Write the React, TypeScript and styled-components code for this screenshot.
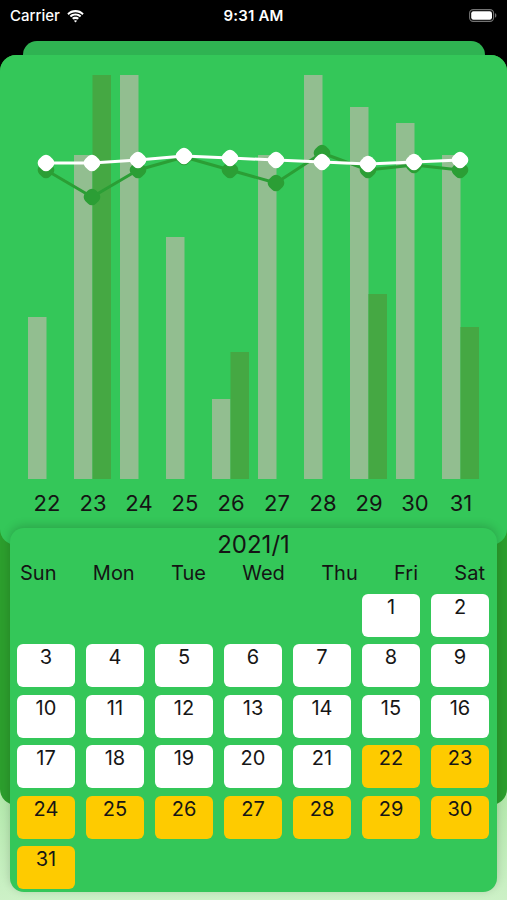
import React from "react";
import styled, { createGlobalStyle } from "styled-components";

const GlobalStyle = createGlobalStyle`
  html, body {
    margin: 0;
    padding: 0;
    background: #000;
  }
  * {
    box-sizing: border-box;
  }
`;

const Page = styled.div`
  width: 507px;
  height: 900px;
  overflow: hidden;
  display: flex;
  flex-direction: column;
  font-family: Inter, "Liberation Sans", sans-serif;
  background: linear-gradient(
    180deg,
    #000 0,
    #000 450px,
    #a9e5a2 450px,
    #b4e9ad 800px,
    #cdf1c7 900px
  );
`;

const StatusBar = styled.div`
  height: 41px;
  flex-shrink: 0;
  display: flex;
  align-items: center;
  justify-content: space-between;
  padding: 0 10px 10px 10px;
  color: #fff;
`;

const Carrier = styled.div`
  display: flex;
  align-items: center;
  gap: 6px;
  font-size: 15px;
  font-weight: 500;
  width: 100px;
`;

const Clock = styled.div`
  font-size: 15px;
  font-weight: 600;
  letter-spacing: 0.2px;
`;

const BatteryWrap = styled.div`
  width: 100px;
  display: flex;
  justify-content: flex-end;
`;

const BackTab = styled.div`
  margin: 0 22px 0 23px;
  height: 14px;
  flex-shrink: 0;
  background: #2fb352;
  border-radius: 14px 14px 0 0;
`;

const Deck = styled.div`
  display: flex;
  flex-direction: column;
  background: #2c9e2d;
  border-radius: 16px;
`;

const ChartCard = styled.div`
  height: 490px;
  background: #34c759;
  border-radius: 16px;
  display: flex;
  flex-direction: column;
`;

const LabelRow = styled.div`
  display: flex;
  padding-left: 24px;
  margin-top: 1px;
`;

const DayLabel = styled.div`
  width: 46px;
  text-align: center;
  font-size: 22px;
  line-height: 34px;
  color: #141414;
`;

const Calendar = styled.div`
  margin: -17px 10px -87px 10px;
  height: 364px;
  background: #34c759;
  border-radius: 14px;
  padding: 3px 7px 3px 7px;
  box-shadow: 0 -2px 10px rgba(0, 0, 0, 0.18);
  display: flex;
  flex-direction: column;
  position: relative;
`;

const Title = styled.div`
  text-align: center;
  font-size: 24px;
  line-height: 28px;
  color: #141414;
`;

const WeekRow = styled.div`
  display: flex;
  justify-content: space-between;
  padding: 0 5px 0 3px;
  margin-top: 2px;
  font-size: 20px;
  line-height: 24px;
  color: #141414;
`;

const Grid = styled.div`
  margin-top: 9px;
  display: grid;
  grid-template-columns: repeat(7, 58px);
  grid-auto-rows: 43px;
  column-gap: 11px;
  row-gap: 7.4px;
`;

const Cell = styled.div<{ $mark?: boolean; $col?: number }>`
  background: ${(p) => (p.$mark ? "#fecb00" : "#fff")};
  border-radius: 6px;
  text-align: center;
  font-size: 20px;
  line-height: 24px;
  padding-top: 1px;
  color: #161616;
  ${(p) => (p.$col ? `grid-column-start: ${p.$col};` : "")}
`;

const labels = [22, 23, 24, 25, 26, 27, 28, 29, 30, 31];

// bar tops (svg coords), bottom is 424
const lightTops = [262, 100, 20, 182, 344, 100, 20, 52, 68, 100];
const darkTops: (number | null)[] = [null, 20, null, null, 297, null, null, 239, null, 272];

const whiteYs = [108, 108, 105, 101, 103, 105, 107, 109, 107, 105];
const darkYs = [115, 142, 115, 102, 115, 128, 98, 115, 110, 115];

const Dot = ({ x, y, fill }: { x: number; y: number; fill: string }) => (
  <rect
    x={x - 7.5}
    y={y - 7.5}
    width={15}
    height={15}
    rx={5.5}
    fill={fill}
    transform={`rotate(45 ${x} ${y})`}
  />
);

const Chart = () => {
  const px = (i: number) => 46 + i * 46;
  const whitePts = whiteYs.map((y, i) => `${px(i)},${y}`).join(" ");
  const darkPts = darkYs.map((y, i) => `${px(i)},${y}`).join(" ");
  return (
    <svg width="507" height="430" style={{ display: "block" }}>
      {lightTops.map((t, i) => (
        <rect key={"l" + i} x={28 + i * 46} y={t} width={18.5} height={424 - t} fill="#92be90" />
      ))}
      {darkTops.map((t, i) =>
        t === null ? null : (
          <rect key={"d" + i} x={46.5 + i * 46} y={t} width={18.5} height={424 - t} fill="#45a843" />
        )
      )}
      <polyline points={darkPts} fill="none" stroke="#2b9e35" strokeWidth={3} strokeLinejoin="round" />
      {darkYs.map((y, i) => (
        <Dot key={"dd" + i} x={px(i)} y={y} fill="#2b9e35" />
      ))}
      <polyline points={whitePts} fill="none" stroke="#fff" strokeWidth={3} strokeLinejoin="round" />
      {whiteYs.map((y, i) => (
        <Dot key={"wd" + i} x={px(i)} y={y} fill="#fff" />
      ))}
    </svg>
  );
};

const Wifi = () => (
  <svg width="19" height="14" viewBox="0 0 19 14">
    <path d="M9.5 3.2c2.6 0 5 1 6.8 2.7l1.4-1.5C15.5 2.3 12.6 1.1 9.5 1.1S3.5 2.3 1.3 4.4l1.4 1.5C4.5 4.2 6.9 3.2 9.5 3.2z" fill="#fff" />
    <path d="M9.5 6.6c1.7 0 3.2.6 4.4 1.7l1.4-1.5C13.8 5.4 11.7 4.5 9.5 4.5S5.2 5.4 3.7 6.8l1.4 1.5c1.2-1.1 2.7-1.7 4.4-1.7z" fill="#fff" />
    <path d="M9.5 9.9c.8 0 1.5.3 2 .7l1.5-1.5c-.9-.9-2.2-1.4-3.5-1.4S6.9 8.2 6 9.1l1.5 1.5c.5-.4 1.2-.7 2-.7z" fill="#fff" />
    <path d="M9.5 13.4l1.6-1.6c-.4-.4-1-.6-1.6-.6s-1.2.2-1.6.6z" fill="#fff" />
  </svg>
);

const Battery = () => (
  <svg width="28" height="13" viewBox="0 0 28 13">
    <rect x="0.6" y="0.6" width="24" height="11.8" rx="3.6" fill="none" stroke="#fff" strokeOpacity="0.45" strokeWidth="1.1" />
    <rect x="2.2" y="2.2" width="20.8" height="8.6" rx="2.2" fill="#fff" />
    <path d="M26 4.3v4.4c.9-.3 1.4-1.2 1.4-2.2S26.9 4.6 26 4.3z" fill="#fff" fillOpacity="0.45" />
  </svg>
);

const weekdays = ["Sun", "Mon", "Tue", "Wed", "Thu", "Fri", "Sat"];
const days = Array.from({ length: 31 }, (_, i) => i + 1);

const App = () => {
  return (
    <Page>
      <GlobalStyle />
      <StatusBar>
        <Carrier>
          Carrier
          <Wifi />
        </Carrier>
        <Clock>9:31 AM</Clock>
        <BatteryWrap>
          <Battery />
        </BatteryWrap>
      </StatusBar>
      <BackTab />
      <Deck>
        <ChartCard>
          <Chart />
          <LabelRow>
            {labels.map((l) => (
              <DayLabel key={l}>{l}</DayLabel>
            ))}
          </LabelRow>
        </ChartCard>
        <Calendar>
          <Title>2021/1</Title>
          <WeekRow>
            {weekdays.map((w) => (
              <span key={w}>{w}</span>
            ))}
          </WeekRow>
          <Grid>
            {days.map((d) => (
              <Cell key={d} $mark={d >= 22} $col={d === 1 ? 6 : undefined}>
                {d}
              </Cell>
            ))}
          </Grid>
        </Calendar>
      </Deck>
    </Page>
  );
};

export default App;
